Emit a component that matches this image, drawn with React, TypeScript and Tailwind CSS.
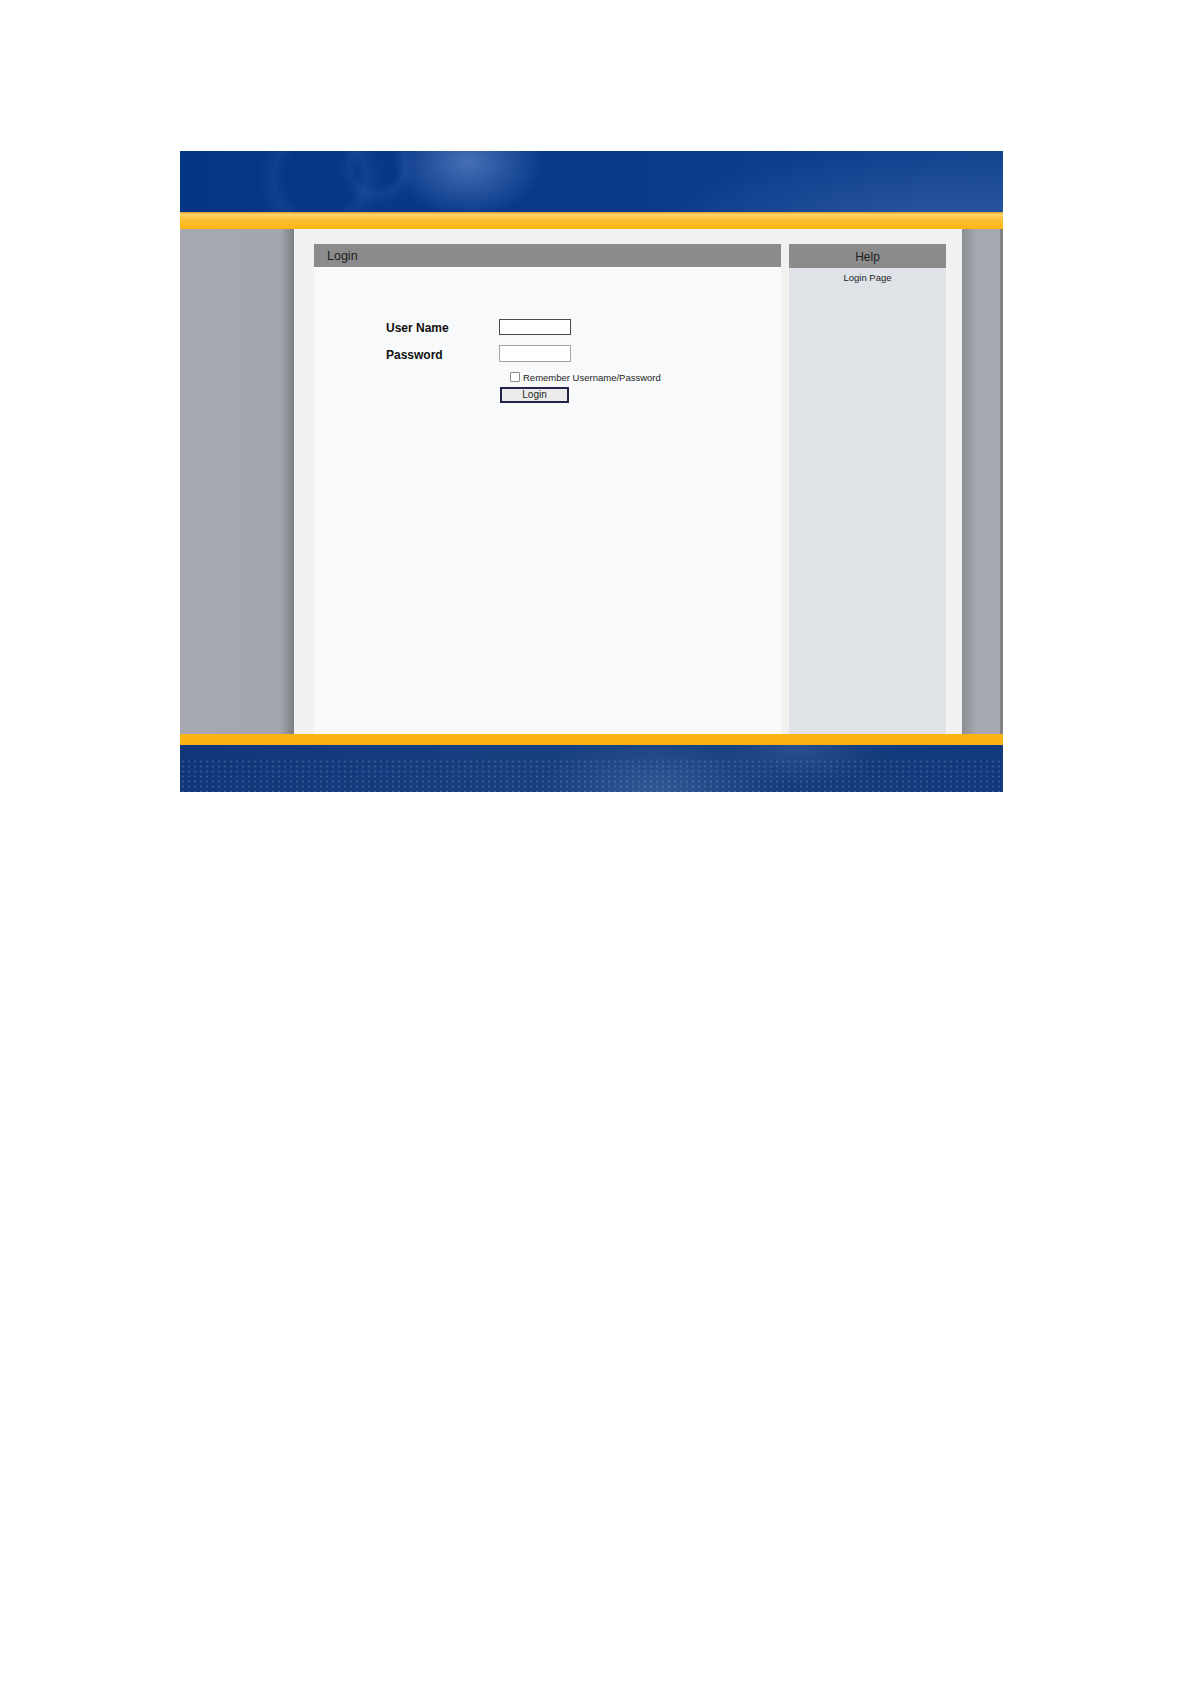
export default function App() {
  return (
    <div className="min-h-screen bg-white pl-[180px] pt-[151px] font-['Liberation_Sans',Arial,sans-serif]">
      <div className="w-[823px]">
        {/* Top banner */}
        <div className="h-[61px] bg-[radial-gradient(ellipse_75px_55px_at_35%_18%,rgba(120,158,220,0.55),rgba(120,158,220,0)),radial-gradient(circle_at_17%_45%,rgba(90,130,200,0)_36px,rgba(90,130,200,0.12)_46px,rgba(90,130,200,0)_62px),radial-gradient(circle_at_24%_25%,rgba(90,130,200,0)_20px,rgba(90,130,200,0.12)_28px,rgba(90,130,200,0)_38px),radial-gradient(ellipse_280px_70px_at_92%_115%,rgba(70,110,180,0.45),rgba(70,110,180,0)),linear-gradient(90deg,#053585,#0a3b8b_60%,#144490)]" />
        <div className="h-[17px] bg-[linear-gradient(180deg,#d99a22_0,#fed46b_14%,#fcbf33_45%,#fdb512_100%)]" />

        {/* Body */}
        <div className="flex h-[505px]">
          <div className="w-[114px] bg-[linear-gradient(90deg,#a6a9af_0,#a3a6ac_88%,#7b7e83_100%)]" />

          <div className="flex w-[668px] gap-[8px] bg-[#f1f1f1] pl-[20px] pr-[16px] pt-[15px]">
            {/* Login panel */}
            <section className="flex w-[467px] flex-col">
              <div className="h-[23px] bg-[#8b8b8b] pl-[13px] text-[12.5px] leading-[25px] text-[#1e1e1e]">
                Login
              </div>
              <div className="flex-1 bg-[#f8f9fa] pl-[72px] pt-[52px] text-[#111]">
                <div className="flex h-[16px] items-center">
                  <label className="w-[113px] pt-[2px] text-[12px] font-bold">User Name</label>
                  <input
                    type="text"
                    className="h-[16px] w-[72px] border border-[#4a4a4a] bg-white outline-none"
                  />
                </div>
                <div className="mt-[10px] flex h-[17px] items-center">
                  <label className="w-[113px] pt-[2px] text-[12px] font-bold">Password</label>
                  <input
                    type="password"
                    className="h-[17px] w-[72px] border border-[#a4a4a4] bg-white outline-none"
                  />
                </div>
                <div className="mt-[10px] flex h-[10px] items-center pl-[124px]">
                  <input
                    type="checkbox"
                    className="h-[10px] w-[10px] appearance-none rounded-[1px] border border-[#8a8a8a] bg-white"
                  />
                  <span className="ml-[3px] pt-[1px] text-[9.5px] leading-[10px] text-[#1e1e1e]">
                    Remember Username/Password
                  </span>
                </div>
                <div className="mt-[5px] pl-[114px]">
                  <button className="flex h-[16px] w-[69px] items-center justify-center border-2 border-[#23234a] bg-[#ececea] text-[10px] leading-none text-[#1e1e1e]">
                    Login
                  </button>
                </div>
              </div>
            </section>

            {/* Help panel */}
            <aside className="flex w-[157px] flex-col">
              <div className="h-[24px] bg-[#8b8b8b] text-center text-[12px] leading-[26px] text-[#1e1e1e]">
                Help
              </div>
              <div className="flex-1 bg-[#dfe3e8] pt-[3px] text-center text-[9.5px] text-[#1e1e1e]">
                Login Page
              </div>
            </aside>
          </div>

          <div className="w-[41px] bg-[linear-gradient(90deg,#8a8d92_0,#a6a9af_35%,#a6a9af_92%,#808286_94%,#808286_100%)]" />
        </div>

        {/* Bottom banner */}
        <div className="h-[11px] bg-[#fcb414]" />
        <div className="h-[47px] bg-[radial-gradient(ellipse_120px_60px_at_58%_95%,rgba(110,145,200,0.3),rgba(110,145,200,0)),radial-gradient(ellipse_80px_40px_at_75%_0%,rgba(90,125,190,0.3),rgba(90,125,190,0)),linear-gradient(90deg,#11377a,#183f80_40%,#163d7c_70%,#12397c)] pt-[14px]">
          <div className="h-[33px] bg-[radial-gradient(circle,rgba(165,190,230,0.5)_0.7px,transparent_1.3px)] bg-[length:6px_5px] opacity-50" />
        </div>
      </div>
    </div>
  );
}
